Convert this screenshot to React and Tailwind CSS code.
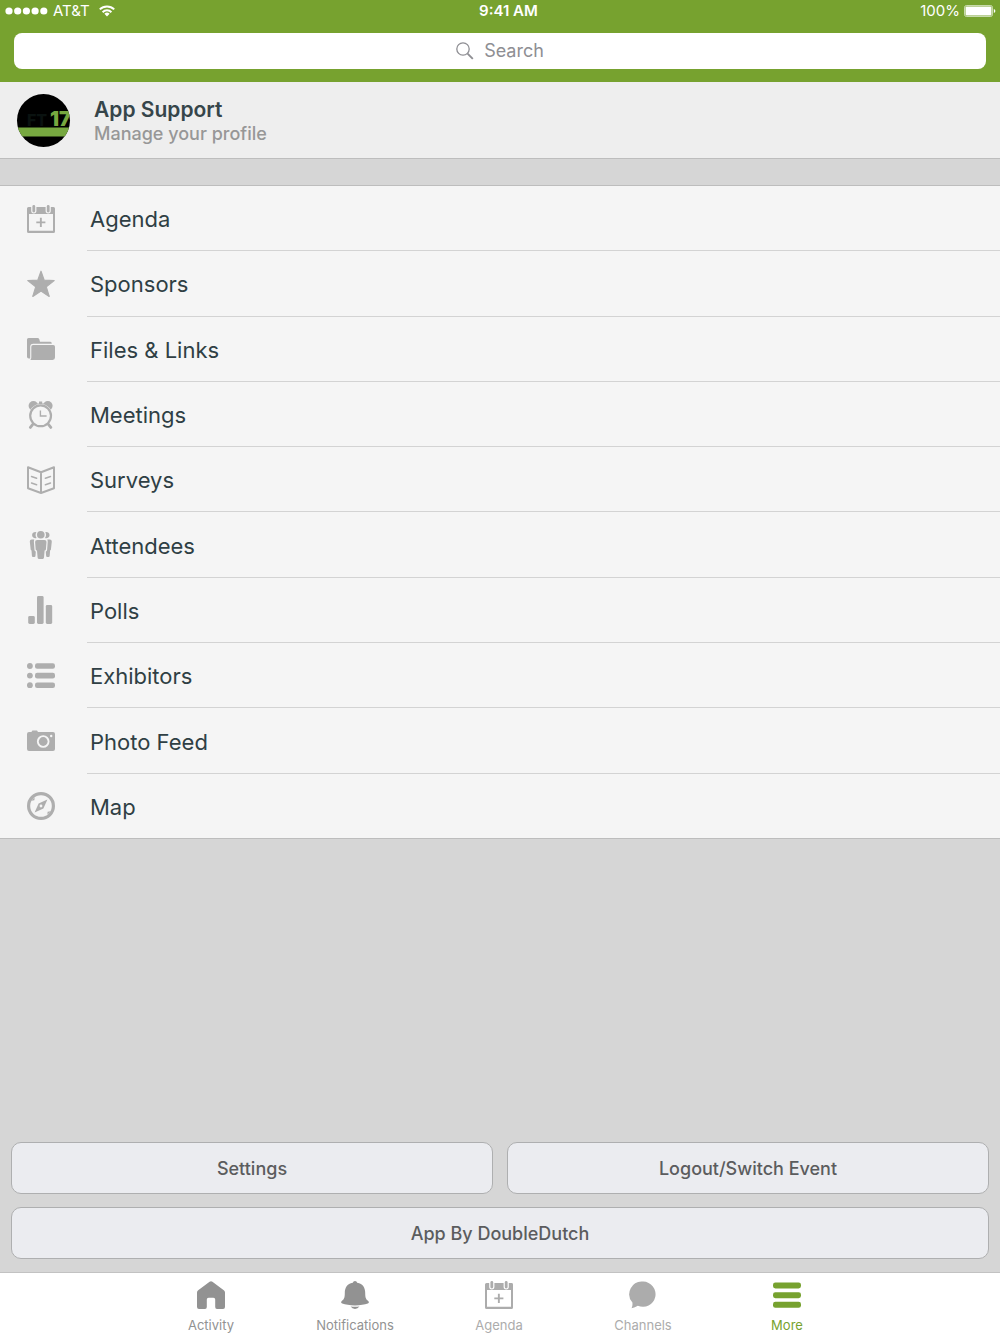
import React from 'react';
import clsx from 'clsx';

const Icon = ({ children, className }) => (
    <svg viewBox="0 0 28 28" fill="currentColor" aria-hidden="true" className={clsx('size-7 shrink-0', className)}>
        {children}
    </svg>
);

const CalendarIcon = () => (
    <Icon>
        <path
            fillRule="evenodd"
            d="M1.5 2H4.2V5.8A2.6 2.6 0 0 0 9.4 5.8V2H18.6V5.8A2.6 2.6 0 0 0 23.8 5.8V2H26.5A1.5 1.5 0 0 1 28 3.5V26.5A1.5 1.5 0 0 1 26.5 28H1.5A1.5 1.5 0 0 1 0 26.5V3.5A1.5 1.5 0 0 1 1.5 2ZM2 9V25.8H26V9Z"
        />
        <rect x="5.4" y="0" width="2.8" height="7.4" rx="1.4" />
        <rect x="19.8" y="0" width="2.8" height="7.4" rx="1.4" />
        <path d="M12.9 12.8H14.8V16.4H18.4V18.3H14.8V21.9H12.9V18.3H9.3V16.4H12.9Z" />
    </Icon>
);

const StarIcon = () => (
    <Icon>
        <path
            strokeWidth="1.2"
            stroke="currentColor"
            strokeLinejoin="round"
            d="M14 1.2L17.2 10.2L27.2 10.6L19.3 16.8L22.2 26.4L14 20.9L5.8 26.4L8.7 16.8L.8 10.6L10.8 10.2Z"
        />
    </Icon>
);

const FolderIcon = () => (
    <Icon>
        <path d="M1.5 3H10.5Q11.8 3 12.3 4.2L13 6.8H23.3Q24.8 6.8 24.8 8.8H6.2Q3.2 8.8 3.2 11.8V23.6H1.8Q0 23.6 0 21.8V4.5Q0 3 1.5 3Z" />
        <path d="M6 10H26.2Q28 10 28 11.8V22.6Q28 25 25.6 25H3.2Q4.3 24.2 4.3 22.6V11.8Q4.3 10 6 10Z" />
    </Icon>
);

const ClockIcon = () => (
    <Icon>
        <circle cx="6.4" cy="4.8" r="4.8" />
        <circle cx="20.8" cy="4.8" r="4.8" />
        <path d="M12 .6H15.2V2.6H17V5H10.2V2.6H12Z" />
        {/* the face covers the inner part of both bells */}
        <circle cx="13.6" cy="14.8" r="11.8" className="fill-[#f5f5f5]" />
        <circle cx="13.6" cy="14.8" r="10.4" fill="none" stroke="currentColor" strokeWidth="2.2" />
        <path
            d="M5.6 23.6L3.4 26.4M21.6 23.6L23.8 26.4"
            fill="none"
            stroke="currentColor"
            strokeWidth="2.8"
            strokeLinecap="round"
        />
        <path d="M13.4 9.6V15H19.6" fill="none" stroke="currentColor" strokeWidth="1.4" />
    </Icon>
);

const BookIcon = () => (
    <Icon>
        <path
            d="M1 1.2L14 6.2L27 1.2V22.3L14 27L1 22.3ZM14 6.2V27"
            fill="none"
            stroke="currentColor"
            strokeWidth="2"
            strokeLinejoin="round"
        />
        <path
            d="M4.5 10.5L9.6 12.2M4.5 17L9.6 18.7M23.5 10.5L18.4 12.2M23.5 17L18.4 18.7"
            fill="none"
            stroke="currentColor"
            strokeWidth="1.5"
            strokeLinecap="round"
        />
    </Icon>
);

const PeopleIcon = () => (
    <Icon>
        <circle cx="13.8" cy="3.8" r="3.8" />
        <path d="M9.4 1.3A3.1 3.1 0 1 0 9.6 6.9A5 5 0 0 1 9.4 1.3ZM18.2 1.3A3.1 3.1 0 1 1 18 6.9A5 5 0 0 0 18.2 1.3Z" />
        <path d="M10.2 9H17.4Q19.6 9 19.5 11L18.9 18.5Q18.8 19.4 17.6 19.4L17 26.6Q16.9 28 15.8 28H11.8Q10.7 28 10.6 26.6L10 19.4Q8.8 19.4 8.7 18.5L8.1 11Q8 9 10.2 9Z" />
        <path d="M4.7 8.4H7.3Q6.8 9.6 6.9 11L7.5 19Q7.6 20.3 8.8 20.5L8.5 24.8Q8.4 26 7.4 26H6Q5 26 4.9 24.8L4.5 19.5L3.7 18.8L2.8 10.5Q2.8 8.4 4.7 8.4ZM22.9 8.4H20.3Q20.8 9.6 20.7 11L20.1 19Q20 20.3 18.8 20.5L19.1 24.8Q19.2 26 20.2 26H21.6Q22.6 26 22.7 24.8L23.1 19.5L23.9 18.8L24.8 10.5Q24.8 8.4 22.9 8.4Z" />
    </Icon>
);

const PollsIcon = () => (
    <Icon>
        <rect x="1.2" y="20" width="6.6" height="8" rx="1.4" />
        <rect x="10" y="0" width="6.6" height="28" rx="1.4" />
        <rect x="18.8" y="9" width="6.4" height="19" rx="1.4" />
    </Icon>
);

const ListIcon = () => (
    <Icon>
        {[4, 13.6, 23.2].map((y) => (
            <React.Fragment key={y}>
                <circle cx="2.9" cy={y} r="2.9" />
                <rect x="8" y={y - 2.8} width="20" height="5.6" rx="2.2" />
            </React.Fragment>
        ))}
    </Icon>
);

const CameraIcon = () => (
    <Icon>
        <path
            fillRule="evenodd"
            d="M2 5H4.4L5.4 3.6H10L11 5H26Q28 5 28 7V22Q28 24 26 24H2Q0 24 0 22V7Q0 5 2 5ZM16.2 8.2A6.3 6.3 0 1 0 16.2 20.8A6.3 6.3 0 1 0 16.2 8.2ZM24.2 7.8A1.2 1.2 0 1 0 24.2 10.2A1.2 1.2 0 1 0 24.2 7.8Z"
        />
        <circle cx="16.2" cy="14.5" r="4.4" />
    </Icon>
);

const CompassIcon = () => (
    <Icon>
        <circle cx="14" cy="14" r="12.4" fill="none" stroke="currentColor" strokeWidth="3.2" />
        <path
            fillRule="evenodd"
            d="M20.4 7.6L16.4 16.4L7.6 20.4L11.6 11.6ZM14 12.6A1.4 1.4 0 1 0 14 15.4A1.4 1.4 0 1 0 14 12.6Z"
        />
        <path d="M4.2 8.8L7.6 5.2L7.4 8.2ZM23.8 19.2L20.4 22.8L20.6 19.8Z" />
    </Icon>
);

const HomeIcon = () => (
    <Icon>
        <path d="M12.6 .8Q14 -.2 15.4 .8L26.8 9.2Q28 10 28 11.6V26Q28 28 26 28H20Q18.2 28 18.2 26V18.6Q18.2 16.8 16.4 16.8H11.6Q9.8 16.8 9.8 18.6V26Q9.8 28 8 28H2Q0 28 0 26V11.6Q0 10 1.2 9.2Z" />
    </Icon>
);

const BellIcon = () => (
    <Icon>
        <path d="M14 0Q15.8 0 16.2 1.8C22 2.8 24.2 7 24.2 12C24.2 17.6 25.4 18.6 27.4 20.2Q28.6 21.8 26.8 22.6Q22 24.4 14 24.4Q6 24.4 1.2 22.6Q-.6 21.8 .6 20.2C2.6 18.6 3.8 17.6 3.8 12C3.8 7 6 2.8 11.8 1.8Q12.2 0 14 0Z" />
        <path d="M9.6 25.6Q14 26 18.4 25.6Q16.8 28 14 28Q11.2 28 9.6 25.6Z" />
    </Icon>
);

const ChatIcon = () => (
    <Icon>
        <path d="M14.2 .6A12.6 12.6 0 1 1 8.8 24.7Q6 26.6 2.6 27.2Q3.8 25 3.4 21.4A12.6 12.6 0 0 1 14.2 .6Z" />
    </Icon>
);

const MenuIcon = () => (
    <Icon>
        <rect x="0" y="1.4" width="28" height="6" rx="2.4" />
        <rect x="0" y="11.2" width="28" height="6" rx="2.4" />
        <rect x="0" y="20.8" width="28" height="6" rx="2.4" />
    </Icon>
);

const menuItems = [
    { label: 'Agenda', icon: CalendarIcon },
    { label: 'Sponsors', icon: StarIcon },
    { label: 'Files & Links', icon: FolderIcon },
    { label: 'Meetings', icon: ClockIcon },
    { label: 'Surveys', icon: BookIcon },
    { label: 'Attendees', icon: PeopleIcon },
    { label: 'Polls', icon: PollsIcon },
    { label: 'Exhibitors', icon: ListIcon },
    { label: 'Photo Feed', icon: CameraIcon },
    { label: 'Map', icon: CompassIcon }
];

const tabs = [
    { label: 'Activity', icon: HomeIcon, color: 'text-[#929292]' },
    { label: 'Notifications', icon: BellIcon, color: 'text-[#929292]' },
    { label: 'Agenda', icon: CalendarIcon, color: 'text-[#acacac]' },
    { label: 'Channels', icon: ChatIcon, color: 'text-[#acacac]' },
    { label: 'More', icon: MenuIcon, color: 'text-[#77a22f]', active: true }
];

const StatusBar = () => (
    <div className="grid h-[21px] grid-cols-3 items-center pr-1 pl-[5px] text-[15px] leading-5 text-white">
        <div className="flex items-center gap-[5px]">
            <svg viewBox="0 0 43 8" fill="currentColor" aria-hidden="true" className="h-2 w-[43px]">
                {[4, 12.7, 21.4, 30.1, 38.8].map((x) => (
                    <circle key={x} cx={x} cy="4" r="3.6" />
                ))}
            </svg>
            <span>AT&amp;T</span>
            <svg viewBox="0 0 16 12" aria-hidden="true" className="ml-1 h-3 w-4">
                <g fill="none" stroke="currentColor" strokeWidth="2">
                    <path d="M.8 4.4A10.2 10.2 0 0 1 15.2 4.4" />
                    <path d="M3.6 7.2A6.2 6.2 0 0 1 12.4 7.2" />
                </g>
                <path d="M8 11.4L5.4 8.8A3.7 3.7 0 0 1 10.6 8.8Z" fill="currentColor" />
            </svg>
        </div>
        <div className="pl-4 text-center font-semibold">9:41 AM</div>
        <div className="flex items-center justify-end gap-1">
            <span>100%</span>
            <svg viewBox="0 0 32 12" aria-hidden="true" className="h-3 w-8">
                <rect x=".5" y=".5" width="28" height="11" rx="2" fill="none" stroke="#fff" strokeOpacity=".6" />
                <rect x="1.5" y="1.5" width="26" height="9" rx="1" fill="#fff" />
                <path d="M29.8 4Q31.4 4.4 31.4 6T29.8 8Z" fill="#fff" />
            </svg>
        </div>
    </div>
);

const SearchBar = () => (
    <label className="mx-[14px] my-3 flex h-9 items-center justify-center gap-[10px] rounded-lg bg-white text-[#8e8e93]">
        <svg viewBox="0 0 18 18" fill="none" stroke="currentColor" aria-hidden="true" className="size-[18px]">
            <circle cx="7" cy="7" r="6.2" strokeWidth="1.3" />
            <path d="M11.6 11.6L16.8 16.8" strokeWidth="1.9" />
        </svg>
        <input
            type="search"
            aria-label="Search"
            placeholder="Search"
            className="field-sizing-content text-lg leading-6 outline-none placeholder:text-[#8e8e93]"
        />
    </label>
);

const Avatar = () => (
    <svg viewBox="0 0 53 53" aria-hidden="true" className="size-[53px] shrink-0 rounded-full bg-black">
        <text x="10" y="32" fontSize="16" fontWeight="800" fill="#0a1210">
            FT
        </text>
        <text x="33" y="32" fontSize="20" fontWeight="900" fill="#77a840">
            17
        </text>
        <rect x="0" y="33.5" width="53" height="9" fill="#77a840" />
    </svg>
);

const ProfileRow = () => (
    <a href="#profile" className="flex h-[77px] items-center gap-6 border-b border-[#bdbdbd] bg-[#eeeeee] pl-[17px]">
        <Avatar />
        <span className="flex flex-col pt-[3px]">
            <span className="text-[21px] leading-6 font-semibold text-[#36454a]">App Support</span>
            <span className="text-lg leading-6 font-medium text-[#979797]">Manage your profile</span>
        </span>
    </a>
);

const MenuList = () => (
    <nav className="mt-[26px] border-y border-[#bdbdbd] bg-[#f5f5f5]">
        <ul className="flex min-h-[652px] flex-col">
            {menuItems.map(({ label, icon: ItemIcon }, index) => (
                <li key={label} className="flex flex-1">
                    <a href="#item" className="flex flex-1 items-center pl-[27px] text-[#aeaeae]">
                        <ItemIcon />
                        <span
                            className={clsx(
                                'ml-8 flex flex-1 items-center self-stretch pt-[2px] pl-[3px] text-[22px] leading-7 text-[#2f3f44]',
                                index < menuItems.length - 1 && 'border-b border-[#d3d3d3]'
                            )}
                        >
                            {label}
                        </span>
                    </a>
                </li>
            ))}
        </ul>
    </nav>
);

const ActionButton = ({ children, className }) => (
    <button
        type="button"
        className={clsx(
            'h-[52px] rounded-[10px] border border-[#aeafb0] bg-[#ebecf0] pt-[2px] text-lg leading-6 font-medium text-[#5b5c5e]',
            className
        )}
    >
        {children}
    </button>
);

const TabBar = () => (
    <nav className="flex h-[62px] justify-center border-t border-[#c2c2c2] bg-white pr-[2px]">
        {tabs.map(({ label, icon: TabIcon, color, active }) => (
            <a
                key={label}
                href="#tab"
                aria-current={active ? 'page' : undefined}
                className={clsx('flex w-36 flex-col items-center gap-2 pt-2', color)}
            >
                <TabIcon />
                <span className="text-[13px] leading-4">{label}</span>
            </a>
        ))}
    </nav>
);

export default function App() {
    return (
        <div className="flex min-h-screen flex-col bg-[#d6d6d6] font-['Inter','Liberation_Sans',sans-serif]">
            <header className="bg-[#77a22f] pb-px">
                <StatusBar />
                <SearchBar />
            </header>
            <main className="flex flex-1 flex-col">
                <ProfileRow />
                <MenuList />
                <div className="mt-auto grid grid-cols-2 gap-x-[14px] gap-y-[13px] px-[11px] pt-6 pb-[13px]">
                    <ActionButton>Settings</ActionButton>
                    <ActionButton>Logout/Switch Event</ActionButton>
                    <ActionButton className="col-span-2">App By DoubleDutch</ActionButton>
                </div>
            </main>
            <TabBar />
        </div>
    );
}
